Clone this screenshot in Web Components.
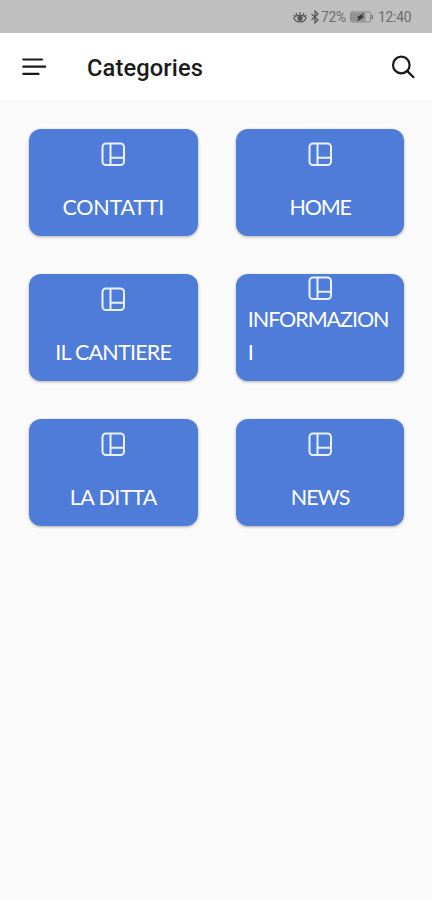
<!DOCTYPE html>
<html lang="it">
<head>
<meta charset="utf-8">
<title>Categories</title>
<style>
html, body { margin: 0; height: 100%; background: #fafafa; }
body { font-family: Roboto, "Liberation Sans", sans-serif; overflow: hidden; }
</style>
</head>
<body>
<categories-app></categories-app>
<script>
class StatusBar extends HTMLElement {
  constructor() {
    super();
    this.attachShadow({ mode: 'open' }).innerHTML = `
<style>
:host { display: flex; align-items: center; justify-content: flex-end; height: 33px; box-sizing: border-box; padding: 1px 20px 0 0; background: #bfbfbf; color: #6c6c6c; font-size: 13.8px; line-height: 16px; }
svg { flex: none; display: block; fill: none; stroke: #555; }
.eye { margin-right: 3px; } .bt { margin-right: 1px; }
.pct { width: 26px; letter-spacing: -.2px; white-space: nowrap; }
.bat { margin: 0 4px 0 3px; }
.time { width: 34px; letter-spacing: -.2px; white-space: nowrap; }
</style>
<svg class="eye" width="14" height="14" viewBox="0 0 14 14" stroke-width="1.2"><path d="M.7 8C3 13.2 11 13.2 13.3 8C11 4.5 3 4.5.7 8ZM7 2v3M3 3l1.3 2.5M11 3L9.700 5.500M.8 5l2 1.800M13.200 5l-2 1.800"/><circle cx="7" cy="8.300" r="2" fill="#555"/></svg>
<svg class="bt" width="10" height="14" viewBox="0 0 10 14" stroke-width="1.2"><path d="M1.500 4L8 10L5 13V1L8 4L1.500 10"/></svg>
<span class="pct">72%</span>
<svg class="bat" width="24" height="12" viewBox="0 0 24 12"><rect x=".6" y="1" width="20" height="10" rx="1.500" stroke="#858585"/><path d="M1 1.500h14.500v9H1z" fill="#949494" stroke="none"/><path d="M22.200 4v4" stroke="#777" stroke-width="1.500"/><path d="M13.500 2.500L7.500 6.300L9.500 7L7.500 9.800L13.500 6L11.500 5.300Z" fill="#383838" stroke="#383838" stroke-width=".8"/></svg>
<span class="time">12:40</span>`;
  }
}
customElements.define('status-bar', StatusBar);

class AppHeader extends HTMLElement {
  constructor() {
    super();
    this.attachShadow({ mode: 'open' }).innerHTML = `
<style>
:host { display: flex; align-items: center; height: 67px; box-sizing: border-box; padding: 0 16px 0 21px; background: #fff; color: #1b1b1b; }
svg { display: block; flex: none; fill: none; stroke: #1b1b1b; stroke-linecap: round; }
h1 { flex: 1; margin: 0 0 0 40px; padding-top: 3px; font-size: 23.700px; line-height: 28px; font-weight: 500; letter-spacing: .1px; }
</style>
<svg width="26" height="22" viewBox="0 0 26 22" stroke-width="2.200"><path d="M2.300 3.500H21M2.300 10.700H24.200M2.300 17.900H17.500"/></svg>
<h1><slot></slot></h1>
<svg width="26" height="26" viewBox="0 0 26 26" stroke-width="2.200"><circle cx="11.300" cy="11" r="8.300"/><path d="M17.400 17.100L23.500 23.200"/></svg>`;
  }
}
customElements.define('app-header', AppHeader);

class CategoryTile extends HTMLElement {
  constructor() {
    super();
    this.attachShadow({ mode: 'open' }).innerHTML = `
<style>
:host { display: flex; flex-direction: column; align-items: center; height: 107px; box-sizing: border-box; padding: 13px 12px 0; border-radius: 12px; background: #4f7cd8; color: #fff; box-shadow: 0 1px 3px rgba(0,0,0,.3); }
:host([wrapped]) { padding-top: 2px; }
svg { display: block; flex: none; fill: none; stroke: #eaf2ff; stroke-width: 2; }
span { display: block; margin-top: 25px; font: 21.500px/32.500px Lato, "Open Sans", sans-serif; letter-spacing: var(--tracking, 0); word-break: break-all; }
:host([wrapped]) span { margin-top: 3px; width: 100%; }
</style>
<svg width="24" height="24" viewBox="0 0 24 24"><rect x="1.500" y="1.500" width="21.500" height="21.500" rx="3.500"/><path d="M9.500 1.500V22.500M9.500 15.800H22.500"/></svg>
<span><slot></slot></span>`;
  }
}
customElements.define('category-tile', CategoryTile);

class CategoriesApp extends HTMLElement {
  constructor() {
    super();
    this.attachShadow({ mode: 'open' }).innerHTML = `
<style>
:host { display: block; width: 432px; height: 900px; background: #fafafa; }
main { display: grid; grid-template-columns: 168.500px 168.500px; column-gap: 38.300px; row-gap: 38px; padding: 29px 0 0 29px; }
</style>
<status-bar></status-bar>
<app-header>Categories</app-header>
<main>
<category-tile style="--tracking:-.2px">CONTATTI</category-tile>
<category-tile style="--tracking:-1.2px">HOME</category-tile>
<category-tile style="--tracking:-.75px">IL CANTIERE</category-tile>
<category-tile style="--tracking:-1.05px" wrapped>INFORMAZIONI</category-tile>
<category-tile style="--tracking:-.5px">LA DITTA</category-tile>
<category-tile style="--tracking:-1px">NEWS</category-tile>
</main>`;
  }
}
customElements.define('categories-app', CategoriesApp);
</script>
</body>
</html>
